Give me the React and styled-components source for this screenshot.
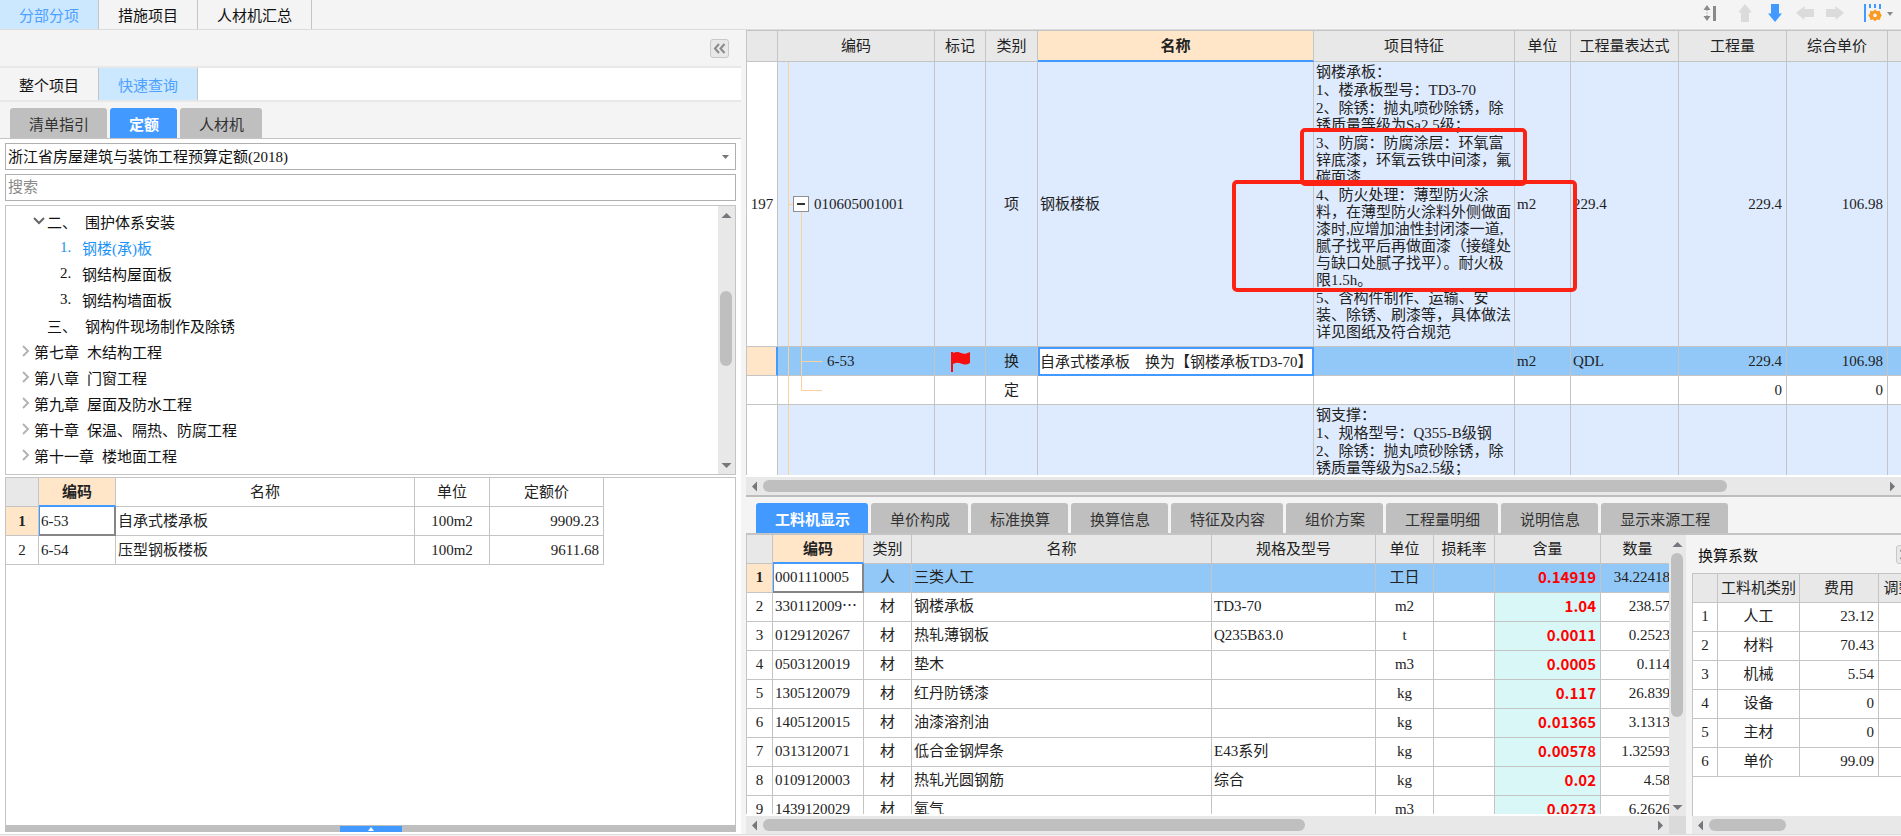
import React, { useState } from 'react'

import styled, { createGlobalStyle, css } from 'styled-components'

const mainTabs = ['分部分项', '措施项目', '人材机汇总']
const queryTabs = ['整个项目', '快速查询']
const sourceTabs = ['清单指引', '定额', '人材机']
const detailTabs = [
   '工料机显示',
   '单价构成',
   '标准换算',
   '换算信息',
   '特征及内容',
   '组价方案',
   '工程量明细',
   '说明信息',
   '显示来源工程',
]

const chapters = [
   { level: 1, open: true, no: '二、', name: '围护体系安装' },
   { level: 2, no: '1.', name: '钢楼(承)板', current: true },
   { level: 2, no: '2.', name: '钢结构屋面板' },
   { level: 2, no: '3.', name: '钢结构墙面板' },
   { level: 1, no: '三、', name: '钢构件现场制作及除锈' },
   { level: 0, closed: true, no: '第七章', name: '木结构工程' },
   { level: 0, closed: true, no: '第八章', name: '门窗工程' },
   { level: 0, closed: true, no: '第九章', name: '屋面及防水工程' },
   { level: 0, closed: true, no: '第十章', name: '保温、隔热、防腐工程' },
   { level: 0, closed: true, no: '第十一章', name: '楼地面工程' },
]

const quotas = [
   { code: '6-53', name: '自承式楼承板', unit: '100m2', price: '9909.23' },
   { code: '6-54', name: '压型钢板楼板', unit: '100m2', price: '9611.68' },
]

const deckFeatures = [
   ['钢楼承板：'],
   ['1、楼承板型号：TD3-70'],
   ['2、除锈：抛丸喷砂除锈，除', '锈质量等级为Sa2.5级；'],
   ['3、防腐：防腐涂层：环氧富', '锌底漆，环氧云铁中间漆，氟', '碳面漆'],
   [
      '4、防火处理：薄型防火涂',
      '料，在薄型防火涂料外侧做面',
      '漆时,应增加油性封闭漆一道,',
      '腻子找平后再做面漆（接缝处',
      '与缺口处腻子找平）。耐火极',
      '限1.5h。',
   ],
   [
      '5、含构件制作、运输、安',
      '装、除锈、刷漆等，具体做法',
      '详见图纸及符合规范',
   ],
]

const braceFeatures = [
   ['钢支撑：'],
   ['1、规格型号：Q355-B级钢'],
   ['2、除锈：抛丸喷砂除锈，除', '锈质量等级为Sa2.5级；'],
]

const resources = [
   ['0001110005', '人', '三类人工', '', '工日', '0.14919', '34.22418'],
   ['330112009⋯', '材', '钢楼承板', 'TD3-70', 'm2', '1.04', '238.57'],
   ['0129120267', '材', '热轧薄钢板', 'Q235Bδ3.0', 't', '0.0011', '0.2523'],
   ['0503120019', '材', '垫木', '', 'm3', '0.0005', '0.114'],
   ['1305120079', '材', '红丹防锈漆', '', 'kg', '0.117', '26.839'],
   ['1405120015', '材', '油漆溶剂油', '', 'kg', '0.01365', '3.1313'],
   ['0313120071', '材', '低合金钢焊条', 'E43系列', 'kg', '0.00578', '1.32593'],
   ['0109120003', '材', '热轧光圆钢筋', '综合', 'kg', '0.02', '4.58'],
   ['1439120029', '材', '氧气', '', 'm3', '0.0273', '6.2626'],
]

const coefficients = [
   ['人工', '23.12'],
   ['材料', '70.43'],
   ['机械', '5.54'],
   ['设备', '0'],
   ['主材', '0'],
   ['单价', '99.09'],
]

const Triangle = ({ dir }) => {
   const turn = { up: 0, right: 90, down: 180, left: 270 }[dir]
   return (
      <svg width="11" height="11" viewBox="0 0 11 11" aria-hidden="true">
         <path
            d="M0.5 8 5.5 3l5 5z"
            fill="#76767c"
            transform={`rotate(${turn} 5.5 5.5)`}
         />
      </svg>
   )
}

const Scroll = ({ vertical, start = 0, size, noEnd }) => (
   <ScrollBar $vertical={vertical}>
      <ScrollButton aria-label={vertical ? '向上滚动' : '向左滚动'}>
         <Triangle dir={vertical ? 'up' : 'left'} />
      </ScrollButton>
      <Track $vertical={vertical}>
         <Spacer $size={start} />
         <Thumb $size={size} />
      </Track>
      {!noEnd && (
         <ScrollButton aria-label={vertical ? '向下滚动' : '向右滚动'}>
            <Triangle dir={vertical ? 'down' : 'right'} />
         </ScrollButton>
      )}
   </ScrollBar>
)

const Features = ({ items }) => (
   <FeatureList>
      {items.map((lines) => (
         <p key={lines[0]}>
            {lines.map((line) => (
               <span key={line}>{line}</span>
            ))}
         </p>
      ))}
   </FeatureList>
)

const Arrow = ({ turn = 0, color = '#dbdbdb' }) => (
   <svg width="20" height="20" viewBox="0 0 20 20" aria-hidden="true">
      <path
         d="M10 1 17 9.5h-3V19H6V9.5H3z"
         fill={color}
         transform={`rotate(${turn} 10 10)`}
      />
   </svg>
)

const Toolbar = () => (
   <ToolbarBox>
      <ToolGroup>
         <ToolButton aria-label="行高">
            <svg width="14" height="18" viewBox="0 0 14 18">
               <path
                  d="M4 1l3.500 5h-7zM4 17l3.500-5h-7zM3.500 6h1v1h-1zM3.500 11h1v1h-1zM3.500 8.500h1v1h-1zM10 2h3v15h-3z"
                  fill="#8a8a8a"
               />
            </svg>
         </ToolButton>
      </ToolGroup>
      <ToolGroup>
         <ToolButton aria-label="上移">
            <Arrow />
         </ToolButton>
         <ToolButton aria-label="下移">
            <Arrow turn={180} color="#4299ff" />
         </ToolButton>
         <ToolButton aria-label="升级">
            <Arrow turn={270} />
         </ToolButton>
         <ToolButton aria-label="降级">
            <Arrow turn={90} />
         </ToolButton>
      </ToolGroup>
      <ToolGroup>
         <ToolButton aria-label="列设置">
            <svg width="30" height="20" viewBox="0 0 30 20">
               <path
                  d="M1 1h2v18H1zM6 1h2v4H6zM11 1h2v4h-2zM16 1h2v5h-2z"
                  fill="#4299ff"
               />
               <path
                  d="M12 6.500l2 1.800 2.700-.5.800 2.600 1.300 2-1.300 2-.8 2.600-2.700-.5-2 1.800-2-1.800-2.700.5-.4-2.600-1.700-2 1.700-2 .4-2.600 2.700.5z"
                  fill="#f99a24"
               />
               <circle cx="12" cy="12.400" r="1.800" fill="#f4f4f4" />
               <path d="M24 9h6l-3 4z" fill="#8a8a8a" />
            </svg>
         </ToolButton>
      </ToolGroup>
   </ToolbarBox>
)

const QuickQuery = () => {
   const [queryTab, setQueryTab] = useState(1)
   const [sourceTab, setSourceTab] = useState(1)

   return (
      <QueryPanel>
         <PanelHead>
            <CollapseButton aria-label="收起">
               <svg width="13" height="11" viewBox="0 0 13 11">
                  <path
                     d="M6 1 2 5.500l4 4.500M11.500 1l-4 4.500 4 4.500"
                     fill="none"
                     stroke="#8a8a8a"
                     strokeWidth="2"
                  />
               </svg>
            </CollapseButton>
         </PanelHead>
         <QueryTabs>
            {queryTabs.map((tab, i) => (
               <FlatTab
                  key={tab}
                  $active={i === queryTab}
                  onClick={() => setQueryTab(i)}
               >
                  {tab}
               </FlatTab>
            ))}
         </QueryTabs>
         <SourceTabs>
            {sourceTabs.map((tab, i) => (
               <PillTab
                  key={tab}
                  $active={i === sourceTab}
                  onClick={() => setSourceTab(i)}
               >
                  {tab}
               </PillTab>
            ))}
         </SourceTabs>
         <QueryBody>
            <SelectBox>
               <Select aria-label="定额库">
                  <option>浙江省房屋建筑与装饰工程预算定额(2018)</option>
               </Select>
               <svg width="7" height="4" viewBox="0 0 7 4" aria-hidden="true">
                  <path d="M0 0h7L3.500 4z" fill="#777" />
               </svg>
            </SelectBox>
            <SearchInput placeholder="搜索" aria-label="搜索" />
            <TreeBox>
               <Tree>
                  {chapters.map((node) => (
                     <TreeNode
                        key={node.name}
                        $level={node.level}
                        $current={node.current}
                     >
                        <Expander>
                           {node.open && (
                              <svg width="12" height="8" viewBox="0 0 12 8">
                                 <path
                                    d="M1 1l5 5 5-5"
                                    fill="none"
                                    stroke="#666"
                                    strokeWidth="2"
                                 />
                              </svg>
                           )}
                           {node.closed && (
                              <svg width="8" height="12" viewBox="0 0 8 12">
                                 <path
                                    d="M1 1l5 5-5 5"
                                    fill="none"
                                    stroke="#b4b4b4"
                                    strokeWidth="2"
                                 />
                              </svg>
                           )}
                        </Expander>
                        <NodeNo $short={node.level === 2}>{node.no}</NodeNo>
                        <span>{node.name}</span>
                     </TreeNode>
                  ))}
               </Tree>
               <Scroll vertical start={29} size={32} />
            </TreeBox>
         </QueryBody>
         <QuotaPane>
            <QuotaTable>
               <colgroup>
                  <col width="33" />
                  <col width="77" />
                  <col width="299" />
                  <col width="75" />
                  <col width="114" />
               </colgroup>
               <thead>
                  <tr>
                     <HeadCell />
                     <HeadCell $current>编码</HeadCell>
                     <HeadCell $plain>名称</HeadCell>
                     <HeadCell $plain>单位</HeadCell>
                     <HeadCell $plain>定额价</HeadCell>
                  </tr>
               </thead>
               <tbody>
                  {quotas.map((row, i) => (
                     <tr key={row.code}>
                        <NumberCell $current={i === 0}>{i + 1}</NumberCell>
                        <Cell $focus={i === 0}>{row.code}</Cell>
                        <Cell>{row.name}</Cell>
                        <Cell $align="center">{row.unit}</Cell>
                        <Cell $align="right">{row.price}</Cell>
                     </tr>
                  ))}
               </tbody>
            </QuotaTable>
         </QuotaPane>
         <DrawerBar>
            <DrawerHandle aria-label="展开">
               <svg width="6" height="4" viewBox="0 0 6 4">
                  <path d="M0 4 3 0l3 4z" fill="#fff" />
               </svg>
            </DrawerHandle>
         </DrawerBar>
      </QueryPanel>
   )
}

const BillGrid = () => (
   <BillPane>
      <BillViewport>
         <Table>
            <colgroup>
               <col width="31" />
               <col width="157" />
               <col width="51" />
               <col width="52" />
               <col />
               <col width="201" />
               <col width="56" />
               <col width="108" />
               <col width="108" />
               <col width="101" />
               <col width="13" />
            </colgroup>
            <thead>
               <BillHeadRow>
                  <HeadCell />
                  <HeadCell>编码</HeadCell>
                  <HeadCell>标记</HeadCell>
                  <HeadCell>类别</HeadCell>
                  <HeadCell $current>名称</HeadCell>
                  <HeadCell>项目特征</HeadCell>
                  <HeadCell>单位</HeadCell>
                  <HeadCell>工程量表达式</HeadCell>
                  <HeadCell>工程量</HeadCell>
                  <HeadCell>综合单价</HeadCell>
                  <HeadCell $last />
               </BillHeadRow>
            </thead>
            <tbody>
               <BillRow $kind="item">
                  <NumberCell>197</NumberCell>
                  <TreeCell $node="root">
                     <ItemCode>
                        <Fold aria-label="折叠">
                           <svg width="14" height="14" viewBox="0 0 14 14">
                              <path d="M3 6h8v2H3z" fill="#333" />
                           </svg>
                        </Fold>
                        010605001001
                     </ItemCode>
                  </TreeCell>
                  <Cell />
                  <Cell $align="center">项</Cell>
                  <Cell>钢板楼板</Cell>
                  <Cell $top>
                     <Features items={deckFeatures} />
                  </Cell>
                  <Cell>m2</Cell>
                  <Cell>229.4</Cell>
                  <Cell $align="right">229.4</Cell>
                  <Cell $align="right">106.98</Cell>
                  <Cell $last />
               </BillRow>
               <BillRow $kind="selected">
                  <NumberCell $current $edge />
                  <TreeCell $node="child">6-53</TreeCell>
                  <Cell $align="center">
                     <svg width="21" height="21" viewBox="0 0 21 21">
                        <path
                           d="M1 1h2v1c3-1.500 5.500-1.500 8 0 3 1.400 5 1 9-1v11c-3 1.800-6 2-9 .6-2.500-1.200-5-1-8 .4v8H1z"
                           fill="#f60d0d"
                        />
                     </svg>
                  </Cell>
                  <Cell $align="center">换</Cell>
                  <Cell $editing>自承式楼承板　换为【钢楼承板TD3-70】</Cell>
                  <Cell />
                  <Cell>m2</Cell>
                  <Cell>QDL</Cell>
                  <Cell $align="right">229.4</Cell>
                  <Cell $align="right">106.98</Cell>
                  <Cell $last />
               </BillRow>
               <BillRow>
                  <NumberCell />
                  <TreeCell $node="last" />
                  <Cell />
                  <Cell $align="center">定</Cell>
                  <Cell />
                  <Cell />
                  <Cell />
                  <Cell />
                  <Cell $align="right">0</Cell>
                  <Cell $align="right">0</Cell>
                  <Cell $last />
               </BillRow>
               <BillRow $kind="item">
                  <NumberCell />
                  <TreeCell />
                  <Cell />
                  <Cell />
                  <Cell />
                  <Cell $top>
                     <Features items={braceFeatures} />
                  </Cell>
                  <Cell />
                  <Cell />
                  <Cell />
                  <Cell />
                  <Cell $last />
               </BillRow>
            </tbody>
         </Table>
         <AntiRustMark />
         <FireproofMark />
      </BillViewport>
      <Scroll size={86} />
   </BillPane>
)

const Details = () => {
   const [active, setActive] = useState(0)

   return (
      <DetailPane>
         <DetailTabs>
            {detailTabs.map((tab, i) => (
               <PillTab
                  key={tab}
                  $active={i === active}
                  onClick={() => setActive(i)}
               >
                  {tab}
               </PillTab>
            ))}
         </DetailTabs>
         <DetailBody>
            <ResourceBox>
               <GridColumn>
                  <ResourceViewport>
                     <ResourceTable>
                        <colgroup>
                           <col width="26" />
                           <col width="91" />
                           <col width="48" />
                           <col />
                           <col width="164" />
                           <col width="58" />
                           <col width="61" />
                           <col width="106" />
                           <col width="74" />
                        </colgroup>
                        <thead>
                           <tr>
                              <HeadCell />
                              <HeadCell $current>编码</HeadCell>
                              <HeadCell>类别</HeadCell>
                              <HeadCell>名称</HeadCell>
                              <HeadCell>规格及型号</HeadCell>
                              <HeadCell>单位</HeadCell>
                              <HeadCell>损耗率</HeadCell>
                              <HeadCell>含量</HeadCell>
                              <HeadCell>数量</HeadCell>
                           </tr>
                        </thead>
                        <tbody>
                           {resources.map((row, i) => (
                              <ResourceRow key={row[0]} $selected={i === 0}>
                                 <NumberCell $current={i === 0}>
                                    {i + 1}
                                 </NumberCell>
                                 <Cell $focus={i === 0}>{row[0]}</Cell>
                                 <Cell $align="center">{row[1]}</Cell>
                                 <Cell>{row[2]}</Cell>
                                 <Cell>{row[3]}</Cell>
                                 <Cell $align="center">{row[4]}</Cell>
                                 <Cell />
                                 <AmountCell $tinted={i > 0}>
                                    {row[5]}
                                 </AmountCell>
                                 <Cell $align="right">{row[6]}</Cell>
                              </ResourceRow>
                           ))}
                        </tbody>
                     </ResourceTable>
                  </ResourceViewport>
                  <Scroll size={61} />
               </GridColumn>
               <ScrollColumn>
                  <Scroll vertical size={67} />
               </ScrollColumn>
            </ResourceBox>
            <CoefBox>
               <CoefTitle>
                  <h2>换算系数</h2>
                  <CollapseButton aria-label="收起换算系数">
                     <svg width="13" height="11" viewBox="0 0 13 11">
                        <path
                           d="M1.500 1l4 4.500-4 4.500M7 1l4 4.500L7 10"
                           fill="none"
                           stroke="#8a8a8a"
                           strokeWidth="2"
                        />
                     </svg>
                  </CollapseButton>
               </CoefTitle>
               <CoefViewport>
                  <CoefTable>
                     <colgroup>
                        <col width="25" />
                        <col width="82" />
                        <col width="79" />
                        <col width="70" />
                     </colgroup>
                     <thead>
                        <tr>
                           <HeadCell />
                           <HeadCell>工料机类别</HeadCell>
                           <HeadCell>费用</HeadCell>
                           <HeadCell>调整系数</HeadCell>
                        </tr>
                     </thead>
                     <tbody>
                        {coefficients.map(([name, fee], i) => (
                           <tr key={name}>
                              <NumberCell>{i + 1}</NumberCell>
                              <Cell $align="center">{name}</Cell>
                              <Cell $align="right">{fee}</Cell>
                              <Cell />
                           </tr>
                        ))}
                     </tbody>
                  </CoefTable>
               </CoefViewport>
               <Scroll size={40} noEnd />
            </CoefBox>
         </DetailBody>
      </DetailPane>
   )
}

const App = () => {
   const [mainTab, setMainTab] = useState(0)

   return (
      <Page>
         <GlobalStyle />
         <TopBar>
            <nav>
               {mainTabs.map((tab, i) => (
                  <FlatTab
                     key={tab}
                     $active={i === mainTab}
                     onClick={() => setMainTab(i)}
                  >
                     {tab}
                  </FlatTab>
               ))}
            </nav>
            <Toolbar />
         </TopBar>
         <Workspace>
            <QuickQuery />
            <Main>
               <BillGrid />
               <Details />
            </Main>
         </Workspace>
      </Page>
   )
}

export default App

const GlobalStyle = createGlobalStyle`
   * {
      box-sizing: border-box;
   }
   body {
      margin: 0;
   }
   body, button, input, select, table {
      font-family: 'Liberation Serif', 'Noto Sans CJK SC', serif;
      font-size: 15px;
      color: #222;
   }
   button {
      padding: 0;
      border: 0;
      background: none;
   }
   svg {
      display: block;
   }
`

const Page = styled.div`
   display: flex;
   flex-direction: column;
   height: 100vh;
   padding-bottom: 1px;
   background: #f4f4f4;
   overflow: hidden;
`
const TopBar = styled.header`
   display: flex;
   justify-content: space-between;
   flex: none;
   height: 30px;
   border-bottom: 1px solid #dcdcdc;
   & nav {
      display: flex;
   }
`
const FlatTab = styled.button`
   height: 100%;
   padding: 0 19px;
   border-right: 1px solid #c4c4c4;
   background: ${(p) => (p.$active ? '#cce8ff' : '#f4f4f4')};
   color: ${(p) => (p.$active ? '#4ea0ff' : '#111')};
`
const ToolbarBox = styled.div`
   display: flex;
   align-items: center;
   gap: 18px;
   padding-right: 8px;
   padding-bottom: 4px;
`
const ToolGroup = styled.div`
   display: flex;
   align-items: center;
   gap: 10px;
`
const ToolButton = styled.button`
   display: flex;
   align-items: center;
`
const Workspace = styled.div`
   display: flex;
   flex: 1;
   min-height: 0;
   gap: 5px;
   border-bottom: 1px solid #dcdcdc;
`
const QueryPanel = styled.aside`
   display: flex;
   flex-direction: column;
   flex: none;
   width: 741px;
   padding-bottom: 2px;
   background: #fff;
`
const PanelHead = styled.div`
   display: flex;
   align-items: center;
   justify-content: flex-end;
   flex: none;
   height: 38px;
   padding-right: 12px;
   border-bottom: 2px solid #e8e8e8;
   background: #f4f4f4;
`
const CollapseButton = styled.button`
   display: flex;
   flex: none;
   align-items: center;
   justify-content: center;
   width: 19px;
   height: 19px;
   border: 1px solid #c8c8c8;
   border-radius: 3px;
   background: #e8e8e8;
`
const QueryTabs = styled.div`
   display: flex;
   flex: none;
   height: 34px;
   border-bottom: 2px solid #e8e8e8;
`
const pillBand = css`
   display: flex;
   flex: none;
   align-items: flex-end;
   gap: 3px;
   height: 37px;
   border-bottom: 1px solid #c4c4c4;
   background: #f4f4f4;
`
const SourceTabs = styled.div`
   ${pillBand}
   padding-left: 10px;
`
const DetailTabs = styled.div`
   ${pillBand}
   padding-left: 10px;
`
const PillTab = styled.button`
   height: 30px;
   padding: 0 18px 0 19px;
   border-radius: 3px 3px 0 0;
   background: ${(p) => (p.$active ? '#4299ff' : '#bfbfbf')};
   color: ${(p) => (p.$active ? '#fff' : '#333')};
   font-weight: ${(p) => (p.$active ? 700 : 400)};
   white-space: nowrap;
`
const QueryBody = styled.div`
   display: flex;
   flex-direction: column;
   flex: none;
   gap: 4px;
   padding: 4px 5px 2px 5px;
`
const SelectBox = styled.div`
   display: grid;
   align-items: center;
   & > * {
      grid-area: 1 / 1;
   }
   & svg {
      justify-self: end;
      margin-right: 7px;
      pointer-events: none;
   }
`
const field = css`
   width: 100%;
   height: 27px;
   padding: 0 3px;
   border: 1px solid #b0b0b0;
   border-radius: 0;
   background: #fff;
   color: #111;
`
const Select = styled.select`
   ${field}
   padding: 0 2px;
   appearance: none;
`
const SearchInput = styled.input`
   ${field}
   padding: 0 2px;
   &::placeholder {
      color: #8a8a8a;
   }
`
const TreeBox = styled.div`
   display: flex;
   height: 270px;
   border: 1px solid #c4c4c4;
`
const Tree = styled.ul`
   flex: 1;
   margin: 0;
   padding: 2px 0 0 12px;
   list-style: none;
   overflow: hidden;
`
const TreeNode = styled.li`
   display: flex;
   align-items: center;
   height: 26px;
   padding-left: ${(p) => p.$level * 13}px;
   color: ${(p) => (p.$current ? '#1c93f5' : '#111')};
   white-space: nowrap;
`
const Expander = styled.span`
   display: flex;
   justify-content: center;
   width: 16px;
`
const NodeNo = styled.span`
   min-width: ${(p) => (p.$short ? 14 : 30)}px;
   margin-right: 8px;
`
const QuotaPane = styled.div`
   flex: 1;
   min-height: 0;
   margin: 0 5px;
   border: 1px solid #c4c4c4;
   border-bottom: 0;
   overflow: hidden;
`
const DrawerBar = styled.div`
   display: flex;
   justify-content: center;
   flex: none;
   height: 7px;
   margin: 0 5px;
   padding-top: 1px;
   background: #bfbfbf;
`
const DrawerHandle = styled.button`
   display: flex;
   align-items: center;
   justify-content: center;
   width: 62px;
   background: #4299ff;
`

const Table = styled.table`
   width: 100%;
   table-layout: fixed;
   border-spacing: 0;
`
const QuotaTable = styled(Table)`
   width: 598px;
`
const ResourceTable = styled(Table)`
   width: calc(100% + 6px);
`
const CoefTable = styled(Table)`
   width: 256px;
`
const HeadCell = styled.th`
   height: 29px;
   padding: 0;
   border-right: ${(p) => (p.$last ? 0 : 1)}px solid #c4c4c4;
   border-bottom: 1px solid #c4c4c4;
   background: ${(p) => (p.$plain ? '#fff' : '#e8e8e8')};
   font-weight: 400;
   line-height: 18px;
   white-space: nowrap;
   ${(p) =>
      p.$current &&
      css`
         border-bottom: 2px solid #4299ff;
         background: #ffe6c8;
         font-weight: 700;
      `}
`
const Cell = styled.td`
   height: 29px;
   padding: 0 4px 0 2px;
   border-right: ${(p) => (p.$last ? 0 : 1)}px solid #c4c4c4;
   border-bottom: 1px solid #c4c4c4;
   line-height: 18px;
   text-align: ${(p) => p.$align || 'left'};
   vertical-align: ${(p) => (p.$top ? 'top' : 'middle')};
   white-space: nowrap;
   & > svg {
      margin: 0 auto;
   }
   ${(p) => p.$align === 'center' && 'padding: 0;'}
   ${(p) =>
      p.$focus &&
      css`
         padding-left: 1px;
         border-left: 1px solid #4299ff;
         border-right: 2px solid #858585;
         border-bottom: 2px solid #858585;
         background: #fff;
      `}
   ${(p) =>
      p.$editing &&
      css`
         padding: 0;
         border: 2px solid #4299ff;
         background: #fff;
      `}
`
const NumberCell = styled(Cell)`
   padding: 0;
   background: #fff;
   text-align: center;
   ${(p) =>
      p.$current &&
      css`
         background: #ffe6c8;
         font-weight: 700;
      `}
   ${(p) => p.$edge && 'border-right: 2px solid #4299ff;'}
`
const AmountCell = styled(Cell)`
   background: ${(p) => (p.$tinted ? '#daf7f8' : 'transparent')};
   color: #f00;
   font-family: 'Noto Sans CJK SC', sans-serif;
   font-weight: 700;
   text-align: right;
`

const guide = 'linear-gradient(#fbd09a, #fbd09a)'
const guides = {
   root: css`
      background-image: ${guide}, ${guide}, ${guide};
      background-position: 10px 0, 23px 100%, 10px 50%;
      background-size: 1px 100%, 1px 50%, 6px 1px;
   `,
   child: css`
      padding-left: 49px;
      background-image: ${guide}, ${guide}, ${guide};
      background-position: 10px 0, 23px 0, 23px 50%;
      background-size: 1px 100%, 1px 100%, 21px 1px;
   `,
   last: css`
      background-image: ${guide}, ${guide}, ${guide};
      background-position: 10px 0, 23px 0, 23px 50%;
      background-size: 1px 100%, 1px 50%, 21px 1px;
   `,
}
const TreeCell = styled(Cell)`
   background-image: ${guide};
   background-position: 10px 0;
   background-size: 1px 100%;
   background-repeat: no-repeat;
   ${(p) => guides[p.$node]}
`
const ItemCode = styled.div`
   display: flex;
   align-items: center;
   gap: 5px;
   padding-left: 13px;
`
const Fold = styled.button`
   width: 16px;
   height: 16px;
   border: 1px solid #8f8f8f;
   background: #fff;
`
const BillHeadRow = styled.tr`
   height: 31px;
`
const rowColors = { item: '#deeafe', selected: '#92c8f7' }
const BillRow = styled.tr`
   height: ${(p) => (p.$kind === 'item' ? 285 : 29)}px;
   background-color: ${(p) => rowColors[p.$kind] || '#fff'};
`
const ResourceRow = styled.tr`
   background-color: ${(p) => (p.$selected ? rowColors.selected : '#fff')};
   & > td {
      padding-bottom: 2px;
   }
`
const FeatureList = styled.div`
   display: flex;
   flex-direction: column;
   gap: 1px;
   padding-top: 2px;
   line-height: 17px;
   & p {
      margin: 0;
   }
   & span {
      display: block;
   }
`

const Main = styled.main`
   display: flex;
   flex-direction: column;
   flex: 1;
   min-width: 0;
`
const BillPane = styled.section`
   display: flex;
   flex-direction: column;
   flex: 1;
   min-height: 0;
   border-top: 1px solid #c4c4c4;
   border-bottom: 2px solid #bdbdbd;
   background: #fff;
`
const BillViewport = styled.div`
   position: relative;
   flex: 1;
   min-height: 0;
   margin-bottom: 2px;
   border-left: 1px solid #c4c4c4;
   overflow: hidden;
`
const Mark = styled.div`
   position: absolute;
   border: 4px solid #fd2314;
   border-radius: 5px;
   pointer-events: none;
`
const AntiRustMark = styled(Mark)`
   top: 97px;
   right: 374px;
   width: 227px;
   height: 58px;
`
const FireproofMark = styled(Mark)`
   top: 149px;
   right: 324px;
   width: 345px;
   height: 112px;
`
const DetailPane = styled.section`
   display: flex;
   flex-direction: column;
   flex: none;
   height: 337px;
`
const DetailBody = styled.div`
   display: flex;
   flex: 1;
   gap: 6px;
   min-height: 0;
   border-top: 1px solid #c4c4c4;
`
const ResourceBox = styled.div`
   display: flex;
   flex: 1;
   min-width: 0;
`
const GridColumn = styled.div`
   display: flex;
   flex-direction: column;
   flex: 1;
   min-width: 0;
   background: #fff;
`
const ResourceViewport = styled.div`
   flex: 1;
   min-height: 0;
   margin-bottom: 2px;
   border-left: 1px solid #c4c4c4;
   overflow: hidden;
`
const ScrollColumn = styled.div`
   display: flex;
   padding-bottom: 18px;
   background: #dadada;
`
const CoefBox = styled.div`
   display: flex;
   flex-direction: column;
   width: 209px;
   background: #fff;
`
const CoefTitle = styled.div`
   display: flex;
   align-items: center;
   justify-content: space-between;
   flex: none;
   height: 38px;
   padding-left: 6px;
   margin-right: -14px;
   background: #f4f4f4;
   & h2 {
      margin: 0;
      font-size: 15px;
      font-weight: 400;
      color: #111;
   }
`
const CoefViewport = styled.div`
   flex: 1;
   min-height: 0;
   border-top: 1px solid #c4c4c4;
   border-left: 1px solid #c4c4c4;
   overflow: hidden;
   & tbody td {
      padding-bottom: 2px;
   }
`

const ScrollBar = styled.div`
   display: flex;
   flex: none;
   flex-direction: ${(p) => (p.$vertical ? 'column' : 'row')};
   ${(p) => (p.$vertical ? 'width: 17px;' : 'height: 18px;')}
   background: #e8e8e8;
`
const ScrollButton = styled.button`
   display: flex;
   flex: none;
   align-items: center;
   justify-content: center;
   min-width: 17px;
   min-height: 18px;
`
const Track = styled.div`
   display: flex;
   flex: 1;
   flex-direction: ${(p) => (p.$vertical ? 'column' : 'row')};
   padding: ${(p) => (p.$vertical ? '0 3px 0 2px' : '3px 0 3px')};
`
const Spacer = styled.div`
   flex: 0 0 ${(p) => p.$size}%;
`
const Thumb = styled.div`
   flex: 0 0 ${(p) => p.$size}%;
   border-radius: 6px;
   background: #bfbfbf;
`
